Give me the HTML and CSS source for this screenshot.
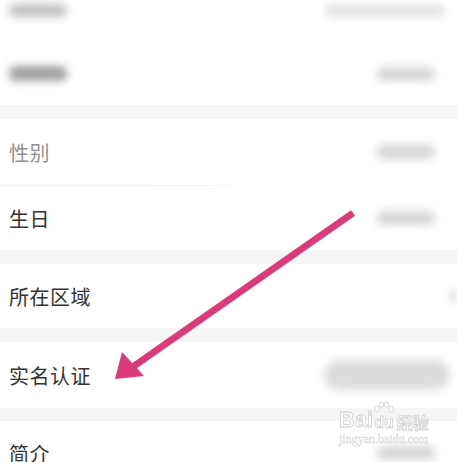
FILE: index.html
```html
<!DOCTYPE html>
<html>
<head>
    <meta charset="utf-8">
    <link rel="stylesheet" href="styles.css">
</head>
<body>
<div class="screen">
    <div class="list">
        <div class="row">
            <span class="blur blur_label"></span>
            <span class="blur blur_long"></span>
        </div>
        <div class="row row_b">
            <span class="blur blur_label dark"></span>
            <span class="blur blur_short"></span>
        </div>
        <div class="band"></div>
        <div class="row row_tall">
            <span class="label faded">性别</span>
            <span class="blur blur_short"></span>
        </div>
        <div class="line"></div>
        <div class="row">
            <span class="label">生日</span>
            <span class="blur blur_short"></span>
        </div>
        <div class="band"></div>
        <div class="row">
            <span class="label">所在区域</span>
            <span class="blur blur_edge"></span>
        </div>
        <div class="band"></div>
        <div class="row row_tall">
            <span class="label">实名认证</span>
            <span class="blur blur_pill"></span>
        </div>
        <div class="band band_thin"></div>
        <div class="row">
            <span class="label">简介</span>
            <span class="blur blur_short"></span>
        </div>
    </div>

    <!-- pointer drawn over the list -->
    <svg class="arrow" width="457" height="462" viewBox="0 0 457 462">
        <line x1="353" y1="213" x2="134" y2="366" stroke="#dc3a78" stroke-width="7" stroke-linecap="butt"/>
        <polygon points="115,379 122,352 134,365 144,376" fill="#dc3a78"/>
    </svg>

    <div class="watermark">
        <div class="wm_top">
            <span class="wm_bai">Bai</span>
            <span class="wm_du">
                <svg class="paw" width="22" height="16" viewBox="0 0 22 16">
                    <ellipse cx="4" cy="8" rx="2.4" ry="3" />
                    <ellipse cx="8.5" cy="4" rx="2.4" ry="2.8" />
                    <ellipse cx="13.5" cy="4" rx="2.4" ry="2.8" />
                    <ellipse cx="18" cy="8" rx="2.4" ry="3" />
                </svg>
                du
            </span>
            <span class="wm_jy">经验</span>
        </div>
        <div class="wm_url">jingyan.baidu.com</div>
    </div>
</div>
</body>
</html>
```

FILE: styles.css
```css
body {
    margin: 0;
    background: #ffffff;
    font-family: "Noto Sans CJK SC", "Noto Sans", sans-serif;
}

.screen {
    position: relative;
    width: 457px;
    height: 462px;
    overflow: hidden;
}

.list {
    display: flex;
    flex-direction: column;
    margin-top: -22px;
}

.row {
    height: 64px;
    display: flex;
    align-items: center;
    justify-content: space-between;
    padding: 0 12px 0 9px;
    background: #ffffff;
}

.row_b {
    height: 63px;
}

.row_tall {
    height: 66px;
}

.band {
    height: 14px;
    background: #f5f5f5;
}

.band_thin {
    height: 13px;
}

.line {
    height: 1px;
    background: linear-gradient(to right, #ececec 0%, #efefef 40%, #ffffff 55%);
}

.label {
    font-size: 20px;
    color: #333333;
    letter-spacing: 0.5px;
}

.faded {
    color: #909090;
}

.blur {
    display: block;
    background: #c9c9c9;
    border-radius: 6px;
    filter: blur(4px);
}

.blur_label {
    width: 58px;
    height: 13px;
    background: #c2c2c2;
}

.blur_label.dark {
    background: #a0a0a0;
    height: 15px;
}

.blur_long {
    width: 120px;
    height: 11px;
    background: #e0e0e0;
}

.blur_short {
    width: 58px;
    height: 14px;
    margin-right: 10px;
    background: #d6d6d6;
}

.blur_edge {
    width: 10px;
    height: 14px;
    margin-right: -14px;
    background: #e2e2e2;
}

.blur_pill {
    width: 126px;
    height: 30px;
    border-radius: 15px;
    margin-right: -5px;
    background: #dcdcdc;
}

.arrow {
    position: absolute;
    left: 0;
    top: 0;
}

.watermark {
    position: absolute;
    left: 339px;
    top: 408px;
    color: #ffffff;
    opacity: 0.9;
    white-space: nowrap;
}

.wm_top {
    display: flex;
    align-items: flex-end;
    gap: 1px;
    font-family: "Liberation Sans", sans-serif;
    font-size: 22px;
    font-weight: bold;
    line-height: 24px;
    -webkit-text-stroke: 0.8px #cccccc;
}

.wm_du {
    position: relative;
    font-size: 16px;
    line-height: 18px;
}

.paw {
    position: absolute;
    left: -1px;
    top: -13px;
    fill: #ffffff;
    stroke: #cccccc;
    stroke-width: 0.8;
}

.wm_jy {
    font-family: "Noto Sans CJK SC", sans-serif;
    font-size: 16px;
    line-height: 20px;
    margin-left: 2px;
}

.wm_url {
    font-family: "Liberation Serif", serif;
    font-size: 12px;
    line-height: 13px;
    margin-top: 1px;
    color: #f4f4f4;
    -webkit-text-stroke: 0.5px #d4d4d4;
}
```
